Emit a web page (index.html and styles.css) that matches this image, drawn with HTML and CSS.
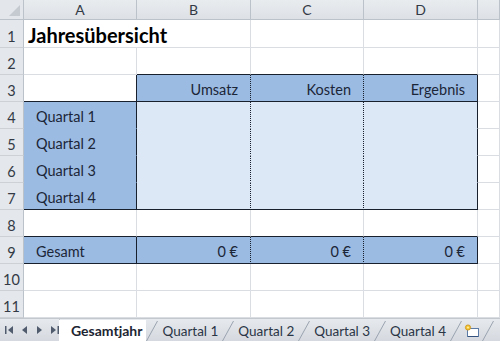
FILE: index.html
```html
<!doctype html>
<html>
<head>
	<meta charset="utf-8"/>
	<title>Jahresübersicht</title>
	<link rel="stylesheet" href="styles.css">
</head>
<body>
	<div class="sheet">
		<div class="grid">
			<div class="corner"><span class="tri"></span></div>
			<div class="colhead">A</div>
			<div class="colhead">B</div>
			<div class="colhead">C</div>
			<div class="colhead">D</div>
			<div class="colhead"></div>

			<div class="rowhead">1</div>
			<div class="cell title">Jahresübersicht</div>
			<div class="cell"></div>
			<div class="cell"></div>
			<div class="cell"></div>

			<div class="rowhead">2</div>
			<div class="cell"></div>
			<div class="cell bb"></div>
			<div class="cell bb"></div>
			<div class="cell bb"></div>
			<div class="cell"></div>

			<div class="rowhead">3</div>
			<div class="cell br bb"></div>
			<div class="cell head num dr bb">Umsatz</div>
			<div class="cell head num dr bb">Kosten</div>
			<div class="cell head num br bb">Ergebnis</div>
			<div class="cell"></div>

			<div class="rowhead">4</div>
			<div class="cell head label br">Quartal 1</div>
			<div class="cell fill dr"></div>
			<div class="cell fill dr"></div>
			<div class="cell fill br"></div>
			<div class="cell"></div>

			<div class="rowhead">5</div>
			<div class="cell head label br">Quartal 2</div>
			<div class="cell fill dr"></div>
			<div class="cell fill dr"></div>
			<div class="cell fill br"></div>
			<div class="cell"></div>

			<div class="rowhead">6</div>
			<div class="cell head label br">Quartal 3</div>
			<div class="cell fill dr"></div>
			<div class="cell fill dr"></div>
			<div class="cell fill br"></div>
			<div class="cell"></div>

			<div class="rowhead">7</div>
			<div class="cell head label br bb">Quartal 4</div>
			<div class="cell fill dr bb"></div>
			<div class="cell fill dr bb"></div>
			<div class="cell fill br bb"></div>
			<div class="cell"></div>

			<div class="rowhead">8</div>
			<div class="cell bb"></div>
			<div class="cell bb"></div>
			<div class="cell bb"></div>
			<div class="cell bb"></div>
			<div class="cell"></div>

			<div class="rowhead">9</div>
			<div class="cell head label br bb">Gesamt</div>
			<div class="cell head num dr bb">0 €</div>
			<div class="cell head num dr bb">0 €</div>
			<div class="cell head num br bb">0 €</div>
			<div class="cell"></div>

			<div class="rowhead">10</div>
			<div class="cell"></div>
			<div class="cell"></div>
			<div class="cell"></div>
			<div class="cell"></div>
			<div class="cell"></div>

			<div class="rowhead">11</div>
			<div class="cell"></div>
			<div class="cell"></div>
			<div class="cell"></div>
			<div class="cell"></div>
			<div class="cell"></div>
		</div>

		<div class="tabbar">
			<div class="nav">
				<svg width="9" height="8" viewBox="0 0 9 8"><rect x="0" y="0" width="1.5" height="8"/><polygon points="8,0 8,8 3,4"/></svg>
				<svg width="6" height="8" viewBox="0 0 6 8"><polygon points="5,0 5,8 0,4"/></svg>
				<svg width="6" height="8" viewBox="0 0 6 8"><polygon points="1,0 1,8 6,4"/></svg>
				<svg width="9" height="8" viewBox="0 0 9 8"><polygon points="1,0 1,8 6,4"/><rect x="7.5" y="0" width="1.5" height="8"/></svg>
			</div>
			<div class="tab active">Gesamtjahr</div>
			<svg class="sep" width="12" height="21" viewBox="0 0 12 21"><line x1="0.5" y1="21" x2="11.5" y2="1"/></svg>
			<div class="tab">Quartal 1</div>
			<svg class="sep" width="12" height="21" viewBox="0 0 12 21"><line x1="0.5" y1="21" x2="11.5" y2="1"/></svg>
			<div class="tab">Quartal 2</div>
			<svg class="sep" width="12" height="21" viewBox="0 0 12 21"><line x1="0.5" y1="21" x2="11.5" y2="1"/></svg>
			<div class="tab">Quartal 3</div>
			<svg class="sep" width="12" height="21" viewBox="0 0 12 21"><line x1="0.5" y1="21" x2="11.5" y2="1"/></svg>
			<div class="tab">Quartal 4</div>
			<svg class="sep" width="12" height="21" viewBox="0 0 12 21"><line x1="0.5" y1="21" x2="11.5" y2="1"/></svg>
			<div class="newtab">
				<svg width="16" height="14" viewBox="0 0 16 14">
					<rect x="3.5" y="4.5" width="11" height="8" fill="#fff" stroke="#5b7aa6"/>
					<line x1="4" y1="12.5" x2="14" y2="12.5" stroke="#34507c"/>
					<circle cx="4" cy="3.5" r="2.6" fill="#f4c431" stroke="#c9911a" stroke-width="0.8"/>
					<circle cx="4" cy="3.5" r="0.9" fill="#fff3b0"/>
				</svg>
			</div>
			<svg class="sep" width="12" height="21" viewBox="0 0 12 21"><line x1="0.5" y1="21" x2="11.5" y2="1"/></svg>
		</div>
	</div>
</body>
</html>
```

FILE: styles.css
```css
body {
	margin: 0;
	background: #ffffff;
	font-family: Lato, "Open Sans", sans-serif;
}
.sheet {
	width: 500px;
	height: 341px;
	overflow: hidden;
}
.grid {
	display: grid;
	grid-template-columns: 24px 113px 114px 113px 114px 1fr;
	grid-template-rows: 20px 28px repeat(10, 27px);
}
.corner, .colhead, .rowhead, .cell {
	box-sizing: border-box;
}
.corner {
	background: #e3e6ea;
	border-right: 1px solid #bcc2ca;
	border-bottom: 1px solid #bcc2ca;
	display: flex;
	align-items: flex-end;
	justify-content: flex-end;
	padding: 0 3px 3px 0;
}
.tri {
	width: 0;
	height: 0;
	border-left: 11px solid transparent;
	border-bottom: 11px solid #c5cad1;
}
.colhead {
	background: linear-gradient(#e9ecef, #dde1e6);
	border-right: 1px solid #bcc2ca;
	border-bottom: 1px solid #bcc2ca;
	color: #333a45;
	font-size: 14px;
	display: flex;
	align-items: center;
	justify-content: center;
}
.rowhead {
	background: #e4e7eb;
	border-right: 1px solid #bcc2ca;
	border-bottom: 1px solid #cdd1d6;
	color: #333a45;
	font-size: 14.5px;
	display: flex;
	align-items: flex-end;
	justify-content: center;
	padding-bottom: 2px;
}
.cell {
	border-right: 1px solid #dadde1;
	border-bottom: 1px solid #dadde1;
	color: #1b2638;
	font-size: 14.5px;
	display: flex;
	align-items: flex-end;
	padding-bottom: 3px;
	white-space: nowrap;
}
.title {
	grid-column: span 2;
	color: #000000;
	font-weight: bold;
	font-size: 20px;
	padding-left: 4px;
	padding-bottom: 0;
}
.head {
	background: #9bbbe2;
	border-bottom-color: #9bbbe2;
}
.fill {
	background: #dce8f5;
	border-bottom-color: #dce8f5;
}
.label {
	padding-left: 12px;
}
.num {
	justify-content: flex-end;
	padding-right: 12px;
}
.br {
	border-right: 1px solid #17202c;
}
.bb {
	border-bottom: 1px solid #17202c;
}
.dr {
	border-right: 1px dotted #17202c;
}
.tabbar {
	height: 23px;
	background: linear-gradient(#e6e9ed, #d5d9df);
	border-top: 1px solid #c3c8cf;
	box-sizing: border-box;
	display: flex;
	align-items: flex-end;
	font-size: 13.5px;
	color: #2a3546;
	white-space: nowrap;
}
.tabbar > * {
	flex-shrink: 0;
}
.nav {
	width: 60px;
	height: 100%;
	display: flex;
	align-items: center;
	gap: 8px;
	padding-left: 5px;
	box-sizing: border-box;
	border-right: 1px solid #c3c8cf;
	fill: #505c6e;
}
.tab {
	height: 21px;
	display: flex;
	align-items: center;
	padding: 0 4px;
}
.tab.active {
	background: #ffffff;
	font-weight: bold;
	font-size: 14px;
	padding: 0 4px 0 12px;
	margin-left: -1px;
	color: #1d2532;
}
.sep {
	stroke: #9aa3b0;
	stroke-width: 1;
}
.newtab {
	height: 21px;
	display: flex;
	align-items: center;
	padding: 0 2px;
}
```
